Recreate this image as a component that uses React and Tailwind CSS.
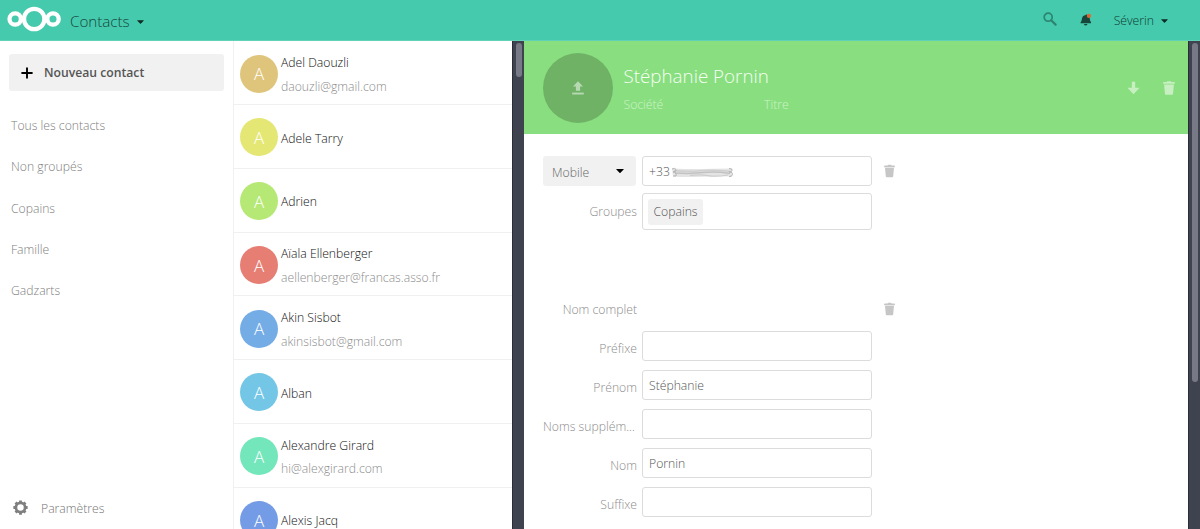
import React from 'react';

const groups = ['Tous les contacts', 'Non groupés', 'Copains', 'Famille', 'Gadzarts'];

const contacts = [
  { name: 'Adel Daouzli', email: 'daouzli@gmail.com', color: 'bg-[#dfc47c]' },
  { name: 'Adele Tarry', color: 'bg-[#e5e774]' },
  { name: 'Adrien', color: 'bg-[#b5e874]' },
  { name: 'Aïala Ellenberger', email: 'aellenberger@francas.asso.fr', color: 'bg-[#e67e74]' },
  { name: 'Akin Sisbot', email: 'akinsisbot@gmail.com', color: 'bg-[#74ace6]' },
  { name: 'Alban', color: 'bg-[#74c6e6]' },
  { name: 'Alexandre Girard', email: 'hi@alexgirard.com', color: 'bg-[#74e6bc]' },
  { name: 'Alexis Jacq', color: 'bg-[#749ce6]' },
];

const nameFields = [
  { label: 'Préfixe', value: '' },
  { label: 'Prénom', value: 'Stéphanie' },
  { label: 'Noms supplém...', value: '', clipped: true },
  { label: 'Nom', value: 'Pornin' },
  { label: 'Suffixe', value: '' },
];

function Caret({ className }) {
  return (
    <svg viewBox="0 0 8 4" className={className} fill="currentColor">
      <path d="M0.4 0h7.2Q7.9 0.2 7.6 0.6L4.5 3.7Q4 4.1 3.5 3.7L0.4 0.6Q0.1 0.2 0.4 0z" />
    </svg>
  );
}

function Logo() {
  return (
    <svg viewBox="0 0 54 26" className="h-[26px] w-[54px] shrink-0" fill="none" stroke="#fff" strokeWidth="4.3">
      <circle cx="27.2" cy="13" r="10.2" />
      <circle cx="8.2" cy="13" r="5.7" />
      <circle cx="46" cy="13" r="5.7" />
    </svg>
  );
}

function Trash({ className }) {
  return (
    <svg viewBox="0 0 12 14" className={className} fill="currentColor">
      <path d="M4.3 0.2h3.4l0.5 0.8h2.8q0.9 0 0.9 0.9v0.9H0.1V1.9q0-0.9 0.9-0.9h2.8z" />
      <path d="M1.1 3.4h9.8l-0.9 9.5q-0.1 0.8-0.9 0.8H2.9q-0.8 0-0.9-0.8z" />
    </svg>
  );
}

function Gear() {
  return (
    <svg viewBox="0 0 16 16" className="-mt-px h-[15px] w-[15px]" fill="none" stroke="#7f7f7f">
      <circle cx="8" cy="8" r="4.9" strokeWidth="2.9" />
      <g strokeWidth="3">
        <path d="M8 0.4v2.4M8 13.2v2.4M0.4 8h2.4M13.2 8h2.4M2.7 2.7l1.6 1.6M11.7 11.7l1.6 1.6M2.7 13.3l1.6-1.6M11.7 4.3l1.6-1.6" />
      </g>
    </svg>
  );
}

function Header() {
  return (
    <header className="flex h-[41px] shrink-0 items-center border-b border-[#5fd2b8] bg-[#46caad] pr-8 pl-[7px] text-[#14483d]">
      <div className="-mt-[2px] flex"><Logo /></div>
      <div className="mt-[2px] ml-[9px] text-[15.2px] leading-5 tracking-[-0.02px]">Contacts</div>
      <Caret className="mt-1 ml-[7px] h-[4px] w-[7px] text-[#0f2b25]" />
      <div className="ml-auto flex items-center">
        <svg viewBox="0 0 14 14" className="mr-[23px] -mt-[2px] h-[14px] w-[14px]" fill="none" stroke="#2c8571">
          <circle cx="5.2" cy="5.2" r="4" strokeWidth="1.7" />
          <path d="M8.2 8.2l4.4 4.4" strokeWidth="2.2" strokeLinecap="round" />
        </svg>
        <svg viewBox="0 0 12 13" className="mr-[22px] h-[13px] w-[12px] -translate-y-px">
          <path d="M5.4 2.2q0.3-1 1.2-0.6L9.6 4.6q0.3 3.6 1.1 4.2 0.5 0.5 0.3 1.4H0.6q-0.2-1 0.3-1.5Q1.7 7.9 2 5.4 2.3 2.5 5.4 2.2z" fill="#17463b" />
          <path d="M3.9 11h3.6q-0.3 1.5-1.8 1.5T3.9 11z" fill="#17463b" />
          <circle cx="8.9" cy="2.9" r="2.1" fill="#e0662f" />
        </svg>
        <span className="mt-px text-[12.2px] leading-5 text-[#0d3a30]">Séverin</span>
        <Caret className="mt-[2px] ml-[7px] h-[4px] w-[7px] text-[#0f2b25]" />
      </div>
    </header>
  );
}

function Sidebar() {
  return (
    <nav className="flex w-[233px] shrink-0 flex-col pt-[13px]">
      <button className="ml-[9px] flex h-[37px] w-[215px] shrink-0 items-center rounded-[3px] bg-[#f1f1f1] pl-3 text-[12.2px] font-semibold text-[#555]">
        <svg viewBox="0 0 12 12" className="mr-[11px] h-[12px] w-[12px]" stroke="#000" strokeWidth="1.9">
          <path d="M6 0.4v11.2M0.4 6h11.2" />
        </svg>
        <span className="mt-px">Nouveau contact</span>
      </button>
      <ul className="mt-[14.7px]">
        {groups.map((g) => (
          <li key={g} className="flex h-[41.25px] items-center pl-[11px] text-[#808080]">{g}</li>
        ))}
      </ul>
      <div className="mt-auto flex h-[42px] items-center pl-[13px] text-[#757575]">
        <Gear />
        <span className="mt-[3px] ml-[13px]">Paramètres</span>
      </div>
    </nav>
  );
}

function ContactList() {
  return (
    <ul className="w-[279px] shrink-0 overflow-hidden border-l border-[#f0f0f0] pt-[0.3px]">
      {contacts.map((c) => (
        <li key={c.name} className="flex h-[63.75px] items-center border-b border-[#f0f0f0] pl-[6px]">
          <div className={`mt-[2px] flex h-[38px] w-[38px] shrink-0 items-center justify-center rounded-full pt-px text-[17px] text-white ${c.color}`}>A</div>
          <div className="mt-[4px] ml-[3px] leading-[23.5px]">
            <div className="text-[#111]">{c.name}</div>
            {c.email && <div className="text-[#8c8c8c]">{c.email}</div>}
          </div>
        </li>
      ))}
    </ul>
  );
}

function Details() {
  return (
    <main className="w-[664px] shrink-0 overflow-hidden">
      <section className="flex h-[93px] items-center bg-[#89df7f] pr-[13px] pl-[19px] text-white">
        <div className="flex h-[70px] w-[70px] shrink-0 items-center justify-center rounded-full bg-[#6fb266]">
          <svg viewBox="0 0 12 14" className="h-[14px] w-[12px]" fill="#b7d9b2">
            <path d="M6 0.2l5 5.4H8.1v4.2H3.9V5.6H1z" />
            <path d="M0.2 11.6h11.6v1.9H0.2z" />
          </svg>
        </div>
        <div className="ml-[10.5px]">
          <div className="mt-[4px] text-[18.8px] leading-[30px] text-[#f5fdf4]">Stéphanie Pornin</div>
          <div className="flex pt-px text-[12.2px] leading-[26px] text-[#cdf3c9]">
            <span className="w-[140.5px]">Société</span>
            <span>Titre</span>
          </div>
        </div>
        <svg viewBox="0 0 14 14" className="mr-[23px] ml-auto h-[14px] w-[13px]" fill="#c7efc2">
          <path d="M5.2 0.3h3.6v6.5h4.7L7 13.6 0.5 6.8h4.7z" />
        </svg>
        <Trash className="h-[14px] w-[12px] text-[#c7efc2]" />
      </section>

      <div className="pt-[22px] pl-[19px]">
        <div className="flex h-[30px] items-center">
          <div className="mr-[6px] flex h-[30px] w-[93px] items-center justify-between rounded-[3px] bg-[#f1f1f1] pt-[4px] pr-[12px] pl-[9px] text-[#666]">
            Mobile
            <Caret className="-mt-[4px] h-[4px] w-[8px] text-black" />
          </div>
          <div className="flex h-[30px] w-[230px] items-center rounded-[3px] border border-[#dcdcdc] pt-[3px] pl-[6px] text-[#555]">
            +33
            <svg viewBox="0 0 64 12" className="-mt-[2px] h-[12px] w-[64px]" fill="none">
              <path d="M2 2.5q18 0.8 30 0.5t30-0.5v8q-14-0.6-30 0.2t-29-0.2z" fill="#e4e4e4" />
              <path d="M4 4.5q14 1.5 26 0.3t30 0.4" stroke="#d0d0d0" strokeWidth="1.6" />
              <path d="M5 7q16 1 28-0.4t27 0.8" stroke="#c2c2c2" strokeWidth="1.5" />
              <path d="M20 9.4q10-1.2 18 0.2t20-0.6" stroke="#cdcdcd" strokeWidth="1.2" />
              <path d="M2 3q3-1.5 4 0.5T3 6q4 0.5 3 4H3M59 2.5q4 0 3 2t-3 1.5q4 0 3.500 2.500T59 10.500" stroke="#adadad" strokeWidth="0.9" />
            </svg>
          </div>
          <Trash className="ml-[12px] h-[14px] w-[11px] text-[#c6c6c6]" />
        </div>

        <div className="mt-[7px] flex h-[37px] items-center">
          <div className="w-[94px] pt-px text-right text-[#8c8c8c]">Groupes</div>
          <div className="ml-[5px] flex h-[37px] w-[230px] items-center rounded-[3px] border border-[#dcdcdc] pl-[5px]">
            <div className="flex h-[26px] w-[55px] items-center justify-center rounded-[3px] bg-[#f1f1f1] pt-px text-[#555]">Copains</div>
          </div>
        </div>

        <div className="mt-[69px] flex h-5 items-center text-[#8c8c8c]">
          <div className="w-[94px] pt-[2px] text-right">Nom complet</div>
          <Trash className="ml-[247px] h-[14px] w-[11px] text-[#c6c6c6]" />
        </div>

        <div className="mt-[12px] flex flex-col gap-[9px]">
          {nameFields.map((f) => (
            <div key={f.label} className="flex h-[30px] items-center">
              <div className={`w-[94px] pt-[6px] whitespace-nowrap text-[#8c8c8c] ${f.clipped ? 'text-left' : 'text-right'}`}>{f.label}</div>
              <div className="ml-[5px] flex h-[30px] w-[230px] items-center rounded-[3px] border border-[#dcdcdc] pt-[3px] pl-[6px] text-[#555]">
                {f.value}
              </div>
            </div>
          ))}
        </div>
      </div>
    </main>
  );
}

export default function App() {
  return (
    <div className="flex h-[529px] w-[1200px] flex-col overflow-hidden bg-white font-['Open_Sans',sans-serif] text-[12.2px] font-light">
      <Header />
      <div className="flex min-h-0 flex-1">
        <Sidebar />
        <ContactList />
        <div className="flex w-[12px] shrink-0 justify-center border-l border-[#292c3a] bg-[#3f434f] pt-[2px]">
          <div className="h-[34px] w-[6px] rounded-full bg-[#777a86]" />
        </div>
        <Details />
        <div className="flex w-[12px] shrink-0 justify-center border-l border-[#292c3a] bg-[#3f434f] pt-[2px]">
          <div className="h-[339px] w-[6px] rounded-full bg-[#777a86]" />
        </div>
      </div>
    </div>
  );
}
